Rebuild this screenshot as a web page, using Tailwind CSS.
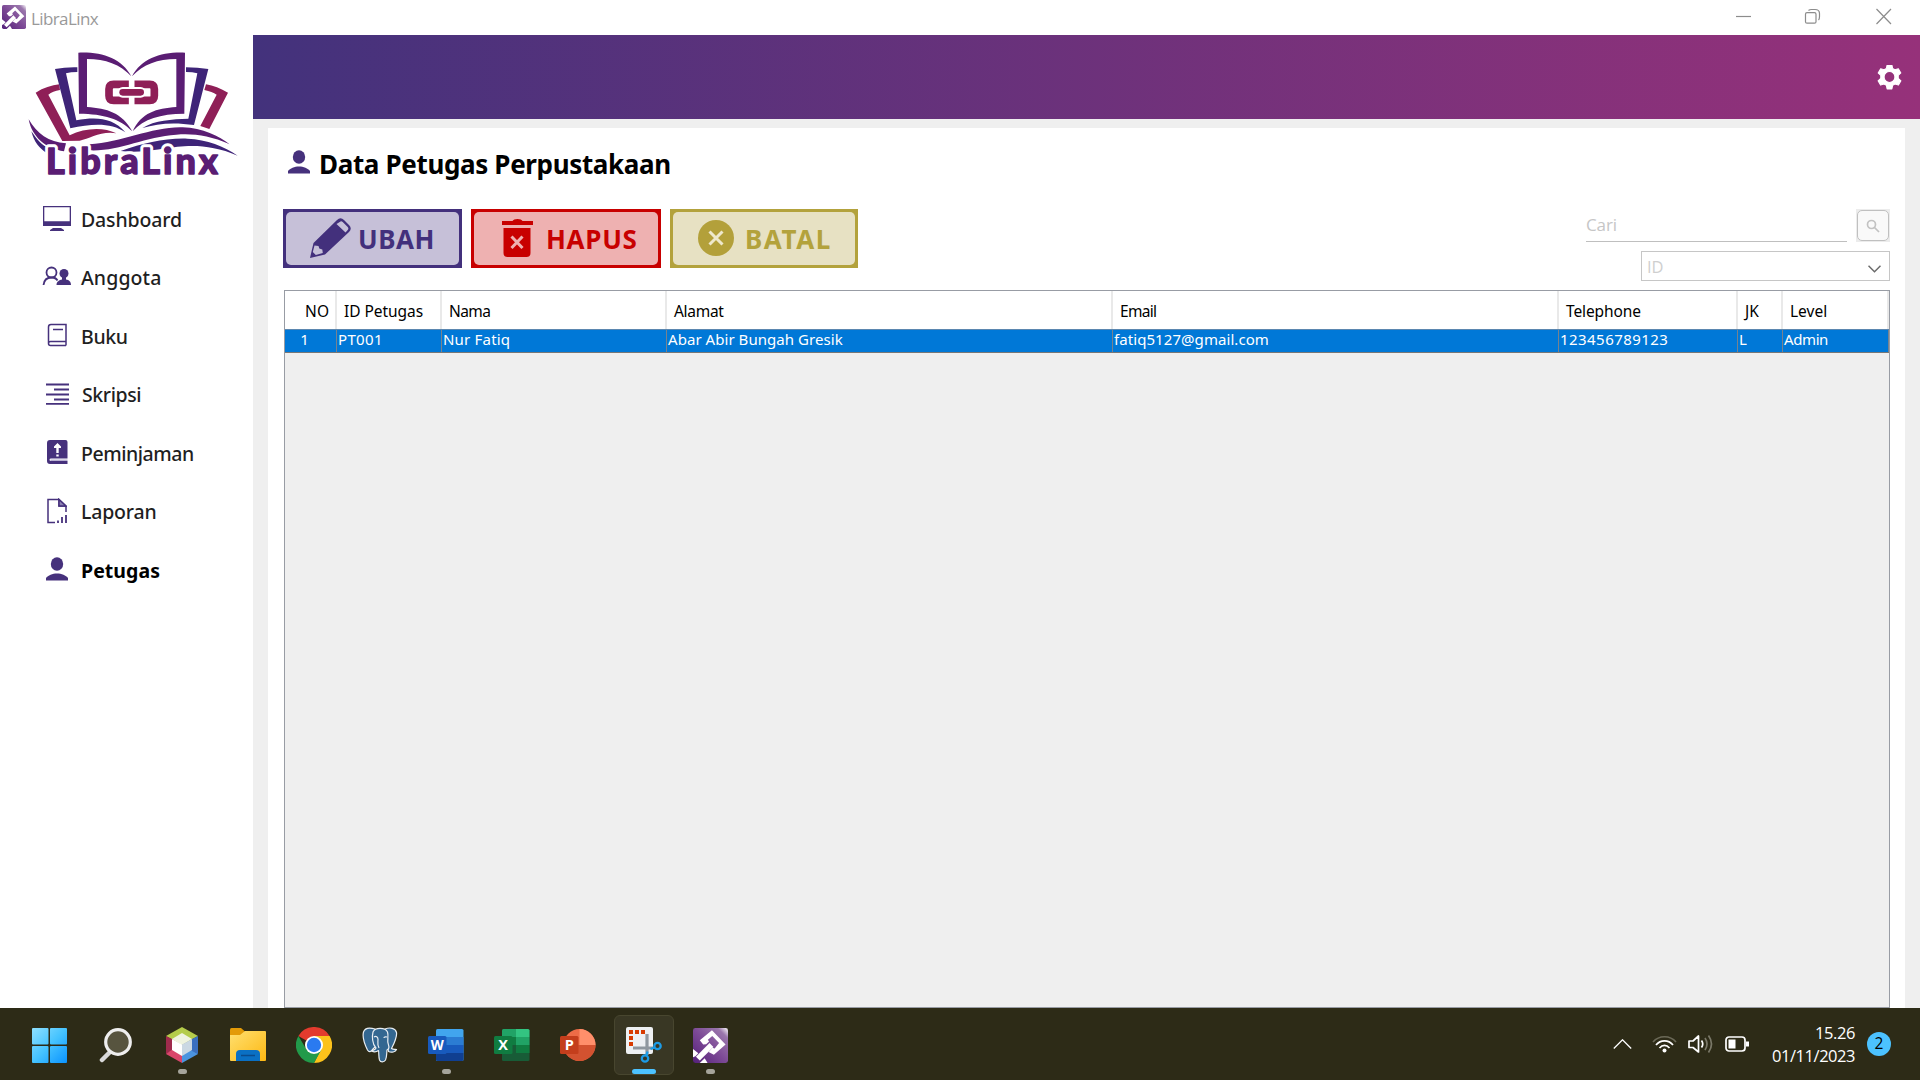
<!DOCTYPE html>
<html lang="id">
<head>
<meta charset="utf-8">
<title>LibraLinx</title>
<script src="https://cdn.jsdelivr.net/npm/@tailwindcss/browser@4"></script>
</head>
<body class="h-[1080px] w-[1920px] overflow-hidden bg-white font-['Noto_Sans',sans-serif] text-black">
<svg class="absolute size-0">
  <defs>
    <linearGradient id="app" x1="0" y1="1" x2="1" y2="0"><stop offset="0" stop-color="#54207a"/><stop offset=".5" stop-color="#7d4a96"/><stop offset=".85" stop-color="#9a76ac"/><stop offset="1" stop-color="#fff"/></linearGradient>
    <linearGradient id="win" gradientUnits="userSpaceOnUse" x1="0" y1="0" x2="35" y2="35"><stop offset="0" stop-color="#8fe0ff"/><stop offset=".5" stop-color="#45c3ff"/><stop offset="1" stop-color="#0a93ff"/></linearGradient>
    <linearGradient id="folder" x1="0" y1="0" x2="1" y2="1"><stop offset="0" stop-color="#ffe070"/><stop offset="1" stop-color="#fdb813"/></linearGradient>
    <symbol id="person" viewBox="0 0 22 24"><ellipse cx="11" cy="7" rx="6.2" ry="6.8"/><path d="M0 23.500v-2.500C2 18.500 6.500 16.500 11 16.500s9 2 11 4.500v2.500z"/></symbol>
    <symbol id="linx" viewBox="0 0 36 36">
      <rect width="36" height="36" rx="2.500" fill="url(#app)"/>
      <path d="M19.500 2.300 7 12.700l3.500 4.300 3-.3 3-2.700-1.200-1.800 4.500-4 7 7.300-4.500 5.500-2.300-.7-4 4.500 5.500 2.800L33.500 17z" fill="#fff"/>
      <path d="M17 15.500 3 29.500l4 4L21 19.500z" fill="#fff"/>
      <path d="M0 21.500 5.500 26l-3 3L0 30zM7 36l5-5 3 5z" fill="#fff"/>
    </symbol>
  </defs>
</svg>

<div class="flex h-full flex-col">
  <!-- Window title bar -->
  <header class="flex h-[35px] shrink-0 items-start">
    <svg class="mt-[5px] ml-[2px] size-6"><use href="#linx"/></svg>
    <span class="mt-[6px] ml-[5px] font-['Open_Sans',sans-serif] text-[17px] leading-[26px] tracking-[-0.6px] text-[#999]">LibraLinx</span>
    <svg class="mt-[8px] mr-[28px] ml-auto h-[17px] w-[157px]" fill="none" stroke="#8c8c8c" stroke-width="1.200">
      <path d="M1 8.500h15"/>
      <rect x="70.500" y="4.700" width="10.500" height="10.500" rx="1.500"/><path d="M73.500 2.500c1-1 2-1 3-1h3.500c3 0 4.500 1 4.500 4v3c0 1.500 0 2.500-1 3.500"/>
      <path d="M141.500 1l14.500 15M156 1l-14.500 15"/>
    </svg>
  </header>

  <div class="flex min-h-0 flex-1">
    <!-- Sidebar -->
    <aside class="w-[253px] shrink-0">
      <svg class="mt-[5px] ml-5 h-[140px] w-[220px] overflow-visible" viewBox="0 0 660 420">
        <g fill="#8f1f57">
          <path d="M47 158C70 143 95 136 118 133l2 17c-15 3-26 7-35 14l64 122c45-22 100-26 140-6-45-8-80 16-110 22l-52 1z"/>
          <path d="M624 158c-22-13-44-21-66-25l-5 17c16 4 28 8 37 14l-49 94 27 9z"/>
        </g>
        <g fill="#3e2478">
          <path d="M105 87q32-6 67-5v14q-20 0-34 4l31 141c60-11 110-8 147 36-40-28-95-28-165-12z"/>
          <path d="M565 87q-32-5-67-5v14q20 0 34 4l-27 136c-50 2-100 4-138 28 45-14 95-18 155-9z"/>
        </g>
        <g fill="#5a1d73">
          <path d="M175 38c70-3 130 17 159 71-34-36-77-52-133-52v144c60 4 105 17 136 73-38-38-84-52-160-53z"/>
          <path d="M495 38c-70-3-130 17-159 71 34-36 77-52 133-52v144c-60 4-105 17-131 73 34-38 82-52 155-53z"/>
          <path d="M26 238c24 42 60 69 112 72l-6 24C78 326 36 292 26 238z"/>
          <path d="M208 313c100-6 190-54 280-51 60 2 110 26 141 51-60-27-110-33-160-29-95 6-170 50-258 47z"/>
        </g>
        <path fill="#3e2478" d="M34 274c18 26 32 43 54 52l-6 14c-24-14-40-34-48-66zM302 333c70-24 130-39 200-37 60 3 110 22 151 51-60-25-110-31-160-28-70 5-120 22-191 14z"/>
        <g fill="none" stroke="#8f1f57" stroke-width="23"><path d="M315 143v-10h-34q-14 0-14 14v20q0 14 14 14h34v-10M355 143v-10h34q14 0 14 14v20q0 14-14 14h-34v-10"/></g>
        <rect x="292" y="141" width="86" height="32" rx="16" fill="#fff"/>
        <rect x="298" y="147" width="74" height="20" rx="10" fill="#8f1f57"/>
        <text x="78" y="402" textLength="516" lengthAdjust="spacing" font-family="Lato" font-weight="900" font-size="108" fill="#5a1d73" stroke="#fff" stroke-width="22" stroke-linejoin="round" paint-order="stroke">LibraLinx</text>
        <text x="78" y="402" textLength="516" lengthAdjust="spacing" font-family="Lato" font-weight="900" font-size="108" fill="#5a1d73" stroke="#5a1d73" stroke-width="4" stroke-linejoin="round">LibraLinx</text>
      </svg>
      <nav class="mt-[10px] text-[19.500px] font-medium text-[#1f1f1f]">
        <a class="flex h-[58.500px] items-center pl-[42px]"><svg class="mr-[10px] mb-[3px] h-[26px] w-[29px]" fill="#46317c"><path d="M1 1h28v20H1zm1.300 1.300v14h25.400v-14z" fill-rule="evenodd"/><path d="M11 23h8l3 2v1H8v-1z"/></svg><span class="tracking-[-0.150px]">Dashboard</span></a>
        <a class="flex h-[58.500px] items-center pl-[42px]"><svg class="mr-[10px] mb-[4px] h-[20px] w-[29px]" fill="#46317c"><circle cx="9.500" cy="6.500" r="5" fill="none" stroke="#46317c" stroke-width="1.800"/><path d="M1.500 19c.5-4.500 3.500-7.500 8-7.500 3 0 5 1 6 3" fill="none" stroke="#46317c" stroke-width="1.800"/><circle cx="22" cy="7.500" r="4.500"/><path d="M14.500 19c0-3.500 3-5 5.500-5.500v-3h4v3c3 .5 5 2 5 5.500z"/></svg><span class="tracking-[0.100px]">Anggota</span></a>
        <a class="flex h-[58.500px] items-center pl-[47px]"><svg class="mr-[13px] mb-[2px] h-[24px] w-[21px]" fill="none" stroke="#46317c" stroke-width="1.500"><path d="M19 19.500V1.500H4Q1.500 1.500 1.500 4v16.500q0 2 2 2H19M1.500 20.500q0-2 2-2H19v4M6 6.500h10"/></svg><span class="tracking-[-0.350px]">Buku</span></a>
        <a class="flex h-[58.500px] items-center pl-[46px]"><svg class="mr-[13px] mb-[2px] h-[22px] w-[23px]" stroke="#46317c" stroke-width="1.800"><path d="M0 1.500h23M8 6.500h15M0 11.500h23M8 16.500h15M0 20.800h23"/></svg><span class="tracking-[-0.400px]">Skripsi</span></a>
        <a class="flex h-[58.500px] items-center pl-[47px]"><svg class="mr-[13px] mb-[2px] h-[24px] w-[21px]" fill="#46317c"><path d="M3 0h15.500q2 0 2 2v16.500H4q-1.500 0-1.500 1.200T4 21h16.500v3H3q-3 0-3-3V3q0-3 3-3z"/><path fill="#fff" d="M10.500 3 14 6.500v1.500h-2.300v5H9.300V8H7V6.500zM9.300 14.500h2.400v2H9.300z"/><path fill="#b9b0d2" d="M3.500 19.500h17v1.500h-17z"/></svg><span class="tracking-[-0.450px]">Peminjaman</span></a>
        <a class="flex h-[58.500px] items-center pl-[47px]"><svg class="mr-[14px] mb-[2px] h-[26px] w-[20px]" fill="none" stroke="#46317c" stroke-width="1.500"><path d="M8 24.500H1V1.500h11l7 6.500v6M12 1.500V8h7z"/><path d="M12 1.500 19 8h-7z" fill="#8c80b2"/><path d="M11 25v-2.500M15 25v-6M19 25v-8" stroke-width="1.800"/></svg><span class="tracking-[-0.200px]">Laporan</span></a>
        <a class="flex h-[58.500px] items-center pl-[46px] font-bold text-black"><svg class="mr-[13px] mb-[2px] h-[24px] w-[22px]" fill="#46317c"><use href="#person"/></svg><span class="tracking-[0.050px]">Petugas</span></a>
      </nav>
    </aside>

    <div class="flex min-w-0 flex-1 flex-col bg-[#efefef]">
      <div class="flex h-[84px] shrink-0 items-center justify-end bg-linear-to-r/srgb from-[#43327c] to-[#96317a] pr-[18px]">
        <svg class="size-[25px]" viewBox="0 0 24 24" fill="#fff"><path fill-rule="evenodd" d="M9.700 0h4.600l.7 3.300 2.200 1.300 3.300-1 2.400 4-2.500 2.300v2.900L23 15.200l-2.400 4.100-3.300-1.100-2.300 1.400-.7 3.400H9.700L9 19.600l-2.300-1.400-3.300 1.100L1 15.200l2.600-2.400V9.900L1.100 7.600l2.400-4 3.300 1L9 3.300zM12 6.300a5.200 5.200 0 1 0 0 10.400 5.200 5.200 0 0 0 0-10.400z" stroke="#fff" stroke-width="1" stroke-linejoin="round"/></svg>
      </div>

      <main class="mt-[9px] mr-[15px] ml-[15px] flex min-h-0 flex-1 flex-col bg-white pr-[15px] pl-[15px]">
        <h1 class="mt-[18px] flex h-[36px] items-center pl-[5px] text-[26px] font-bold">
          <svg class="mr-[9px] mb-[4px] h-[24px] w-[22px]" fill="#46317c"><use href="#person"/></svg>
          <span class="tracking-[-0.350px]">Data Petugas Perpustakaan</span>
        </h1>

        <div class="mt-[27px] flex h-[81px] items-start">
          <button class="h-[59px] w-[179px] bg-[#43307c] p-[3px]"><span class="flex h-full items-center rounded-[5px] bg-[#c6c0d8] pl-[24px] text-[26px] font-bold text-[#43307c]">
            <svg class="mr-[6px] mb-[2px] h-[42px] w-[42px]" viewBox="0 0 42 42" fill="#43307c"><path fill-rule="evenodd" d="M0 41 3.500 26 27 3q3.500-3.500 7 0l5 5q3.500 3.500 0 7L15 37.500zM26.500 7l9 8.500 2.200-2.500q1.300-1.500 0-3l-5-5q-1.500-1.300-3 0zM4.500 28.500 2.800 35l3 3 7-2-.5-3.500-3-1-.8-2.500z"/></svg><span class="pt-[2px] tracking-[0.500px]">UBAH</span></span></button>
          <button class="ml-[9px] h-[59px] w-[190px] bg-[#c80000] p-[3px]"><span class="flex h-full items-center rounded-[5px] bg-[#eeb1b1] pl-[28px] text-[26px] font-bold text-[#c80000]">
            <svg class="mr-[13px] mb-[2px] h-[38px] w-[31px]" viewBox="0 0 31 38" fill="#c80000"><path d="M0 2h10.500q1-2 5-2t5 2H31v4H0zM1.500 9h27v25q0 4-4 4h-19q-4 0-4-4z"/><path d="M9.500 17.500 20.500 29M20.500 17.500 9.500 29" stroke="#eeb1b1" stroke-width="3"/></svg><span class="pt-[2px] tracking-[0.700px]">HAPUS</span></span></button>
          <button class="ml-[9px] h-[59px] w-[188px] bg-[#b3a23c] p-[3px]"><span class="flex h-full items-center rounded-[5px] bg-[#e7e1c3] pl-[25px] text-[26px] font-bold text-[#b3a23c]">
            <svg class="mr-[11px] mb-[2px] h-[36px] w-[36px]" fill="#b3a03a"><circle cx="18" cy="18" r="18"/><path d="m11.500 11.500 13 13m0-13-13 13" stroke="#eee8cc" stroke-width="3"/></svg><span class="pt-[2px] tracking-[1.500px]">BATAL</span></span></button>

          <div class="ml-auto flex w-[304px] flex-col font-['Open_Sans',sans-serif]">
            <div class="flex h-[33px] items-start justify-between">
              <div class="h-[33px] w-[261px] border-b border-[#bfbfbf] text-[17px] leading-[32px] tracking-[-0.100px] text-[#c6c6c6]">Cari</div>
              <button class="h-[33px] w-[34px] bg-[#ececec] p-[1px]"><span class="flex h-full items-center justify-center rounded-[5px] border border-[#c0c0c0] bg-[#f9f9f9]"><svg class="size-[14px]" fill="none" stroke="#c2c2c2" stroke-width="1.700"><circle cx="5.500" cy="5.500" r="4"/><path d="m8.500 8.500 4.500 4.500"/></svg></span></button>
            </div>
            <div class="mt-[9px] ml-auto flex h-[30px] w-[249px] items-center justify-between border border-[#c6c6c6] pr-[8px] pl-[5px] text-[16.500px] text-[#cfcfcf]"><span class="pt-[3px]">ID</span><svg class="mt-[5px] h-[8px] w-[13px]" fill="none" stroke="#6b6b6b" stroke-width="1.500"><path d="m.5.800 6 6 6-6"/></svg></div>
          </div>
        </div>

        <!-- Officers table -->
        <div class="min-h-0 w-[1606px] flex-1 border border-[#989ca4] bg-[#efefef] ml-[1px] text-[15.500px] whitespace-nowrap">
          <div class="grid h-[38px] grid-cols-[52px_105px_225px_446px_446px_179px_45px_1fr] bg-white *:flex *:items-center *:border-r-2 *:border-[#e9e9e9] *:pt-[3px] *:pl-[7px]">
            <div class="justify-end pr-[6px]">NO</div>
            <div><span class="tracking-[-0.050px]">ID Petugas</span></div>
            <div><span class="tracking-[-0.600px]">Nama</span></div>
            <div><span class="tracking-[-0.300px]">Alamat</span></div>
            <div><span class="tracking-[-0.700px]">Email</span></div>
            <div><span class="tracking-[-0.100px]">Telephone</span></div>
            <div><span>JK</span></div>
            <div><span>Level</span></div>
          </div>
          <div class="grid h-[24px] grid-cols-[52px_105px_225px_446px_446px_179px_45px_1fr] grid-rows-[22px] border-t border-b border-t-[#5b87b0] border-b-[#777] bg-[#0078d7] text-[15px] leading-[18px] text-white *:flex *:items-center *:border-r *:border-[#77828e] *:pb-[4px] *:pl-[1px]">
            <div class="justify-center pr-[13px]">1</div>
            <div><span class="tracking-[0.350px]">PT001</span></div>
            <div><span class="tracking-[0.200px]">Nur Fatiq</span></div>
            <div><span class="tracking-[0.050px]">Abar Abir Bungah Gresik</span></div>
            <div><span class="tracking-[0.070px]">fatiq5127@gmail.com</span></div>
            <div><span class="tracking-[0.450px]">123456789123</span></div>
            <div><span>L</span></div>
            <div><span class="tracking-[-0.400px]">Admin</span></div>
          </div>
        </div>
      </main>
    </div>
  </div>

  <!-- Taskbar -->
  <footer class="flex h-[72px] shrink-0 items-center bg-[#2d2b17] pt-[2px] pl-[19px] font-['Open_Sans',sans-serif] text-white">
    <div class="flex *:relative *:flex *:h-[60px] *:w-[60px] *:items-center *:justify-center">
      <div class="mr-[7px]"><svg class="size-[35px]" fill="url(#win)"><rect width="16.500" height="16.500" rx="1"/><rect x="18" width="17" height="16.500" rx="1"/><rect y="18" width="16.500" height="17" rx="1"/><rect x="18" y="18" width="17" height="17" rx="1"/></svg></div>
      <div class="mr-[6px]"><svg class="size-[36px]" fill="none"><path d="m4 33 9-9" stroke="#d9d9d9" stroke-width="4.500" stroke-linecap="round"/><circle cx="20" cy="15" r="12.300" fill="#57543f" stroke="#eee" stroke-width="3.200"/></svg></div>
      <div class="mr-[6px]"><svg class="h-[36px] w-[32px]"><path fill="#b5cc4b" d="M16 0 32 9 16 18 0 9z"/><path fill="#9e2b4c" d="M0 9l8 4v10l-8 4z"/><path fill="#d9456a" d="M0 27l7-5 9 6v8z"/><path fill="#4b94e0" d="M16 36v-8l9-6 7 5z"/><path fill="#3a6fc0" d="M32 9v18l-8-4V13z"/><path fill="#eff3df" d="m16 6 10 6-10 6-10-6z"/><path fill="#fff" d="m6 12 10 5.500V29L6 23z"/><path fill="#cbd8e3" d="M26 12 16 17.500V29l10-6z"/></svg><i class="absolute bottom-[1px] h-[5px] w-[9px] rounded-full bg-[#a5a49b]"></i></div>
      <div class="mr-[6px]"><svg class="h-[34px] w-[36px]"><path fill="#e39b08" d="M0 1.500Q0 0 1.500 0H11l4 3.500V8H0z"/><path fill="url(#folder)" d="M0 7h10l5-4h20q1 0 1 1v28q0 1-1 1H1q-1 0-1-1z"/><path fill="#0a70c4" d="M6 33v-7q0-4 4-4h16q4 0 4 4v7z"/><path d="M11 27.500h14" stroke="#0a4b8c" stroke-width="1.500"/></svg></div>
      <div class="mr-[6px]"><svg class="size-[36px]" viewBox="0 0 36 36"><path fill="#e33b2e" d="M18 18 2.400 9A18 18 0 0 1 33.600 9z"/><path fill="#fcc21b" d="M18 18V9h15.600A18 18 0 0 1 18 36l7-14z"/><path fill="#229a4a" d="M2.400 9 10.500 22.500 18 27l7.500-4.500L18 36A18 18 0 0 1 2.400 9z"/><circle cx="18" cy="18" r="9" fill="#fff"/><circle cx="18" cy="18" r="7.200" fill="#2a7af0"/></svg></div>
      <div class="mr-[6px]"><svg class="size-[36px]" viewBox="0 0 36 36" fill="#336791" stroke="#e9eef2" stroke-width="1.200" stroke-linejoin="round"><path d="M13 2C8 .5 3 .5 1.500 5c-1.300 5 1.500 13 4 18 1.500 2.500 3.500 2 5-.5l3-3z"/><path d="M23 2c5-2 10.500-1 11.500 3.500.8 5-3 12-5 16 2 1.500 4 .5 5 1-1 2.500-5 3.500-8 2z"/><path d="M11 5c2-4.500 12-5 14.500 0 1.500 4-1 9 1 13 .8 2 .5 4-1.500 5-.5 4 0 7-1.500 10-1.500 2.500-5 2.500-6 0-1-3-.5-7-1-9.500-2 1.500-5 1.500-7 .5 2-1 4-1.500 4.500-3C10 17 10 9 11 5z"/><path fill="none" d="M12 10c2-1.500 4 0 4 2.500S15 18 17 21M25 10c-2-.5-3 0-3 1"/></svg></div>
      <div class="mr-[6px]"><svg class="h-[32px] w-[36px]"><rect x="8" width="27.500" height="32" rx="1.500" fill="#41a5ee"/><path fill="#2b7cd3" d="M8 8h27.500v8H8z"/><path fill="#185abd" d="M8 16h27.500v8H8z"/><path fill="#103f91" d="M8 24h27.500v6.500q0 1.500-1.500 1.500H9.500Q8 32 8 30.500z"/><rect y="7" width="18.500" height="18" rx="1.500" fill="#185abd"/><text x="9.200" y="21" text-anchor="middle" font-family="Open Sans" font-weight="700" font-size="13.500" fill="#fff">W</text></svg><i class="absolute bottom-[1px] h-[5px] w-[9px] rounded-full bg-[#a5a49b]"></i></div>
      <div class="mr-[6px]"><svg class="h-[32px] w-[36px]"><rect x="8" width="27.500" height="32" rx="1.500" fill="#185c37"/><path fill="#21a366" d="M8 1.500Q8 0 9.500 0H22v16H8z"/><path fill="#107c41" d="M8 8h14v8H8z"/><path fill="#33c481" d="M22 0h12q1.500 0 1.500 1.500V8H22z"/><path fill="#21a366" d="M22 8h13.500v8H22z"/><path fill="#107c41" d="M22 16h13.500v8H22z"/><rect y="7" width="18.500" height="18" rx="1.500" fill="#107c41"/><text x="9.200" y="21" text-anchor="middle" font-family="Open Sans" font-weight="700" font-size="14.500" fill="#fff">X</text></svg></div>
      <div class="mr-[6px]"><svg class="h-[32px] w-[36px]"><circle cx="19.500" cy="16" r="16" fill="#ed6c47"/><path fill="#ff8f6b" d="M19.500 0a16 16 0 0 1 16 16h-16z"/><path fill="#d35230" d="M35.500 16a16 16 0 0 1-32 0z"/><rect y="7" width="18.500" height="18" rx="1.500" fill="#c43e1c"/><text x="9.200" y="21" text-anchor="middle" font-family="Open Sans" font-weight="700" font-size="14.500" fill="#fff">P</text></svg></div>
      <div class="mr-[6px] rounded-[6px] border border-[#48462f] bg-[#393724]"><svg class="size-[36px]"><rect width="27" height="27" rx="2" fill="#eef0f3"/><path fill="#d83b01" d="M3 3h4v4H3zm6 0h4v4H9zm6 0h4v4h-4zM3 9h4v4H3zm0 6h4v4H3z"/><path d="M21 7v21M7 21h20" stroke="#8f979f" stroke-width="3.200"/><g fill="none" stroke="#1c9be6" stroke-width="2.300"><circle cx="31.500" cy="19" r="3.200"/><circle cx="19" cy="31.500" r="3.200"/><path d="m28.500 20.500-4 1.500M20.500 28.500l1-4"/></g></svg><i class="absolute bottom-0 h-[5px] w-[24px] rounded-full bg-[#4cc2ff]"></i></div>
      <div><svg class="size-[35px]"><use href="#linx"/></svg><i class="absolute bottom-[1px] h-[5px] w-[9px] rounded-full bg-[#a5a49b]"></i></div>
    </div>

    <div class="ml-auto flex items-center pr-[29px] pb-[2px]">
      <svg class="mr-[20px] h-[10px] w-[19px]" fill="none" stroke="#fff" stroke-width="1.300"><path d="m.800 9.500 8.700-8.700 8.700 8.700"/></svg>
      <svg class="mr-[11px] h-[18px] w-[25px]" fill="none" stroke="#fff" stroke-width="1.700"><path d="M1 7c6-7 17-7 23 0" stroke="#6b6957"/><path d="M4 10c4.500-5.500 12.500-5.500 17 0M7.500 13c3-3.500 7-3.500 10 0"/><circle cx="12.500" cy="15.500" r="2" fill="#fff" stroke="none"/></svg>
      <svg class="mr-[12px] h-[20px] w-[25px]" fill="none" stroke="#fff" stroke-width="1.700"><path d="M1 7h4l5.500-5v16L5 13.500H1z" stroke-linejoin="round"/><path d="M13.500 6.500q2.500 3.500 0 7"/><path d="M17 4q4 6 0 12M20.500 1.500q6 8.500 0 17" stroke="#7a7868"/></svg>
      <svg class="mr-[23px] h-[16px] w-[24px]" fill="none" stroke="#fff" stroke-width="1.700"><rect x="1" y="1" width="19" height="14" rx="3"/><path fill="#fff" stroke="none" d="M3.500 3.500h7v9h-7zM21 5.500h3v5h-3z"/></svg>
      <div class="w-[83px] text-right text-[16.500px] leading-[23px] whitespace-nowrap"><div class="tracking-[-0.400px]">15.26</div><div class="tracking-[-0.450px]">01/11/2023</div></div>
      <div class="ml-[12px] flex size-[24px] items-center justify-center rounded-full bg-[#4cc2ff] text-[15.500px] text-black">2</div>
    </div>
  </footer>
</div>
</body>
</html>
